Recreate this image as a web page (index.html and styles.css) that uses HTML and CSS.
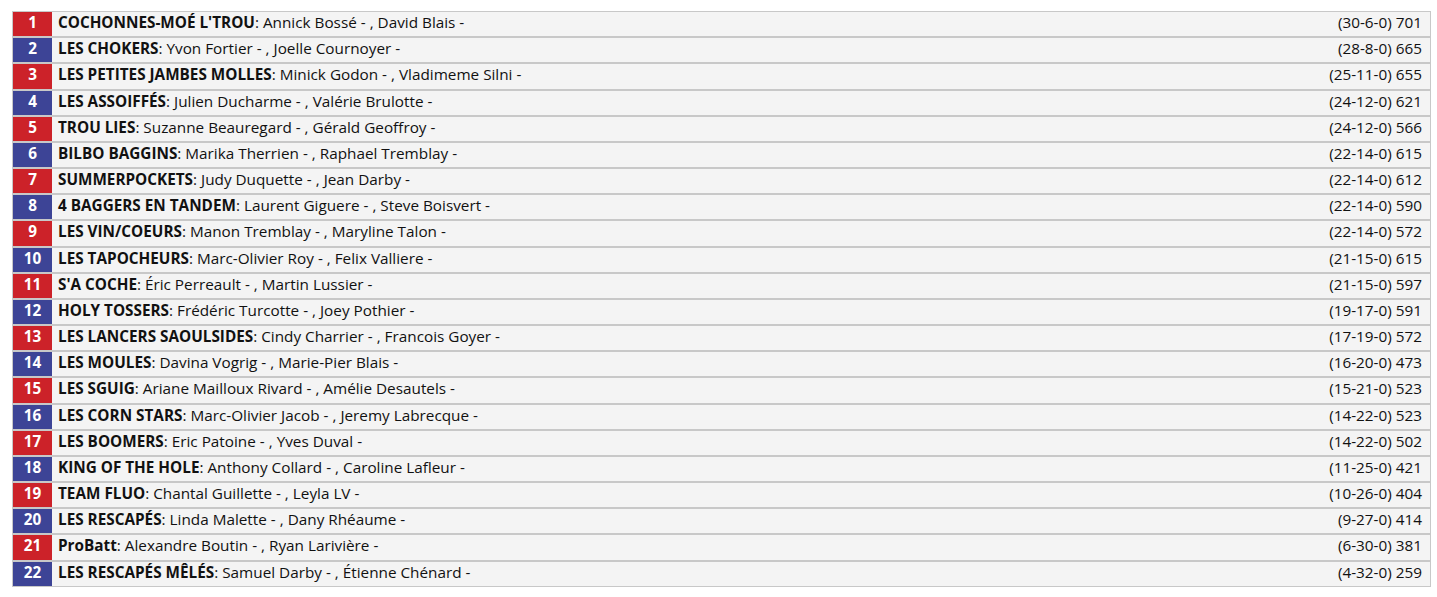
FILE: index.html
```html
<!DOCTYPE html>
<html lang="fr">
<head>
<meta charset="utf-8">
<title>Classement</title>
<link rel="stylesheet" href="styles.css">
</head>
<body>
<div class="standings">
  <div class="row odd"><div class="rank">1</div><div class="team"><b>COCHONNES-MOÉ L'TROU</b>: Annick Bossé - , David Blais -</div><div class="score">(30-6-0) 701</div></div>
  <div class="row even"><div class="rank">2</div><div class="team"><b>LES CHOKERS</b>: Yvon Fortier - , Joelle Cournoyer -</div><div class="score">(28-8-0) 665</div></div>
  <div class="row odd"><div class="rank">3</div><div class="team"><b>LES PETITES JAMBES MOLLES</b>: Minick Godon - , Vladimeme Silni -</div><div class="score">(25-11-0) 655</div></div>
  <div class="row even"><div class="rank">4</div><div class="team"><b>LES ASSOIFFÉS</b>: Julien Ducharme - , Valérie Brulotte -</div><div class="score">(24-12-0) 621</div></div>
  <div class="row odd"><div class="rank">5</div><div class="team"><b>TROU LIES</b>: Suzanne Beauregard - , Gérald Geoffroy -</div><div class="score">(24-12-0) 566</div></div>
  <div class="row even"><div class="rank">6</div><div class="team"><b>BILBO BAGGINS</b>: Marika Therrien - , Raphael Tremblay -</div><div class="score">(22-14-0) 615</div></div>
  <div class="row odd"><div class="rank">7</div><div class="team"><b>SUMMERPOCKETS</b>: Judy Duquette - , Jean Darby -</div><div class="score">(22-14-0) 612</div></div>
  <div class="row even"><div class="rank">8</div><div class="team"><b>4 BAGGERS EN TANDEM</b>: Laurent Giguere - , Steve Boisvert -</div><div class="score">(22-14-0) 590</div></div>
  <div class="row odd"><div class="rank">9</div><div class="team"><b>LES VIN/COEURS</b>: Manon Tremblay - , Maryline Talon -</div><div class="score">(22-14-0) 572</div></div>
  <div class="row even"><div class="rank">10</div><div class="team"><b>LES TAPOCHEURS</b>: Marc-Olivier Roy - , Felix Valliere -</div><div class="score">(21-15-0) 615</div></div>
  <div class="row odd"><div class="rank">11</div><div class="team"><b>S'A COCHE</b>: Éric Perreault - , Martin Lussier -</div><div class="score">(21-15-0) 597</div></div>
  <div class="row even"><div class="rank">12</div><div class="team"><b>HOLY TOSSERS</b>: Frédéric Turcotte - , Joey Pothier -</div><div class="score">(19-17-0) 591</div></div>
  <div class="row odd"><div class="rank">13</div><div class="team"><b>LES LANCERS SAOULSIDES</b>: Cindy Charrier - , Francois Goyer -</div><div class="score">(17-19-0) 572</div></div>
  <div class="row even"><div class="rank">14</div><div class="team"><b>LES MOULES</b>: Davina Vogrig - , Marie-Pier Blais -</div><div class="score">(16-20-0) 473</div></div>
  <div class="row odd"><div class="rank">15</div><div class="team"><b>LES SGUIG</b>: Ariane Mailloux Rivard - , Amélie Desautels -</div><div class="score">(15-21-0) 523</div></div>
  <div class="row even"><div class="rank">16</div><div class="team"><b>LES CORN STARS</b>: Marc-Olivier Jacob - , Jeremy Labrecque -</div><div class="score">(14-22-0) 523</div></div>
  <div class="row odd"><div class="rank">17</div><div class="team"><b>LES BOOMERS</b>: Eric Patoine - , Yves Duval -</div><div class="score">(14-22-0) 502</div></div>
  <div class="row even"><div class="rank">18</div><div class="team"><b>KING OF THE HOLE</b>: Anthony Collard - , Caroline Lafleur -</div><div class="score">(11-25-0) 421</div></div>
  <div class="row odd"><div class="rank">19</div><div class="team"><b>TEAM FLUO</b>: Chantal Guillette - , Leyla LV -</div><div class="score">(10-26-0) 404</div></div>
  <div class="row even"><div class="rank">20</div><div class="team"><b>LES RESCAPÉS</b>: Linda Malette - , Dany Rhéaume -</div><div class="score">(9-27-0) 414</div></div>
  <div class="row odd"><div class="rank">21</div><div class="team"><b>ProBatt</b>: Alexandre Boutin - , Ryan Larivière -</div><div class="score">(6-30-0) 381</div></div>
  <div class="row even"><div class="rank">22</div><div class="team"><b>LES RESCAPÉS MÊLÉS</b>: Samuel Darby - , Étienne Chénard -</div><div class="score">(4-32-0) 259</div></div>
</div>
</body>
</html>
```

FILE: styles.css
```css
html, body {
  margin: 0;
  padding: 0;
  background: #ffffff;
}

body {
  font-family: "Open Sans", "Liberation Sans", sans-serif;
  font-size: 15.3px;
  line-height: 16px;
  color: #111111;
}

.standings {
  padding: 11px 6px 0 12px;
  display: flex;
  flex-direction: column;
}

.row {
  display: flex;
  align-items: stretch;
  height: 26.18px;
  box-sizing: border-box;
  border: 1px solid #c8c8c8;
  background: #f4f4f4;
}

.rank {
  width: 39px;
  flex: none;
  padding-top: 2px;
  text-align: center;
  color: #ffffff;
  font-weight: bold;
}

.odd .rank {
  background: #cc2229;
}

.even .rank {
  background: #3d4496;
}

.team {
  flex: 1;
  padding-top: 2px;
  padding-left: 6px;
  white-space: pre;
}

.team b {
  font-weight: bold;
}

.score {
  flex: none;
  padding-top: 2px;
  padding-right: 8px;
}
```
